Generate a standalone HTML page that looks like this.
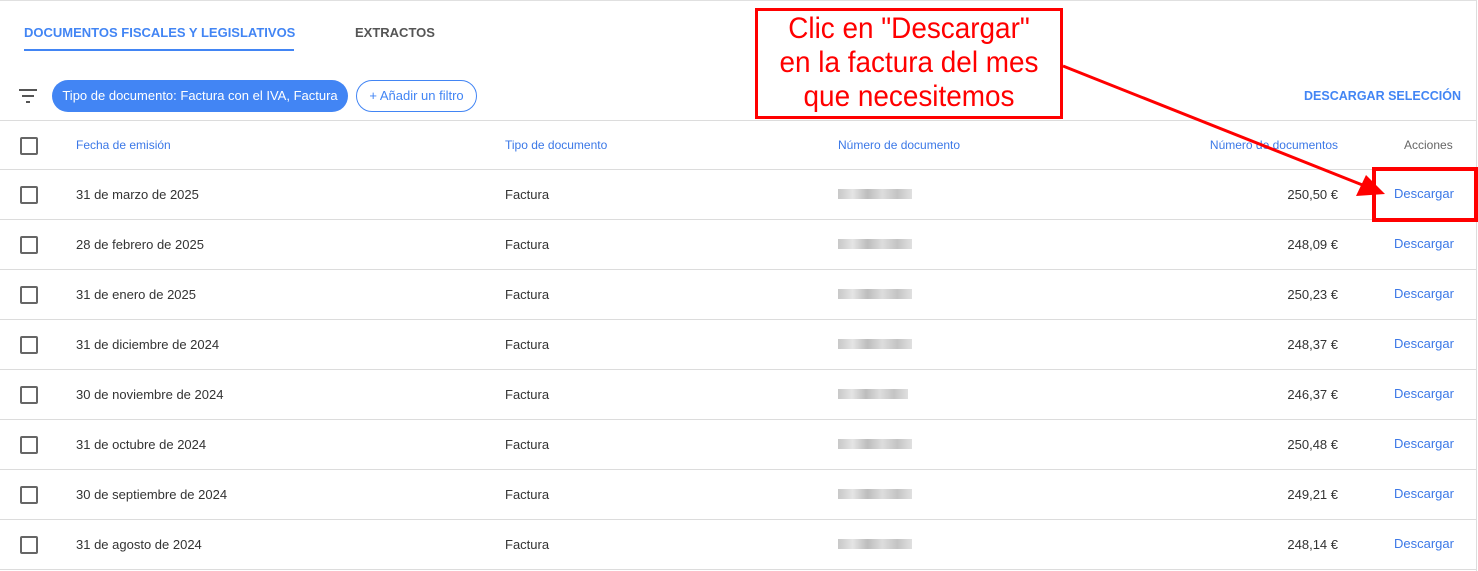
<!DOCTYPE html>
<html><head><meta charset="utf-8"><style>
body{margin:0;width:1478px;height:571px;background:#fff;font-family:"Liberation Sans",Arial,sans-serif;position:relative;overflow:hidden;color:#333}
.a{position:absolute;white-space:nowrap}
.hl{position:absolute;left:0;width:1476px;height:1px;background:#dcdcdc}
.cb{position:absolute;left:20px;width:14px;height:14px;border:2px solid #666;border-radius:2px}
.t{font-size:13px;color:#333}
.bl{color:#3b78e7}
.blur{position:absolute;left:838px;width:74px;height:10px;background:linear-gradient(90deg,#c8c8c8,#e4e4e4 20%,#bdbdbd 40%,#ddd 60%,#c4c4c4 80%,#e0e0e0)}
</style></head><body>
<div class="hl" style="top:0;background:#e0e0e0"></div>
<div style="position:absolute;left:1476px;top:0;width:1px;height:571px;background:#ddd"></div>
<div class="a bl" style="left:24px;top:25px;font-size:13px;font-weight:bold;color:#4285f4">DOCUMENTOS FISCALES Y LEGISLATIVOS</div>
<div style="position:absolute;left:24px;top:49px;width:270px;height:2px;background:#4285f4"></div>
<div class="a" style="left:355px;top:25px;font-size:13px;font-weight:bold;color:#555">EXTRACTOS</div>
<svg class="a" style="left:18px;top:88px" width="20" height="16"><path d="M1 2h18M4 8h12M8 14h4" stroke="#555" stroke-width="2"/></svg>
<div class="a" style="left:52px;top:80px;width:296px;height:32px;border-radius:16px;background:#4285f4;color:#fff;font-size:13px;line-height:32px;text-align:center">Tipo de documento: Factura con el IVA, Factura</div>
<div class="a" style="left:356px;top:80px;width:119px;height:30px;border-radius:16px;border:1px solid #4285f4;color:#4285f4;font-size:13px;line-height:30px;text-align:center">+ Añadir un filtro</div>
<div class="a" style="right:17px;top:89px;font-size:12.5px;font-weight:bold;color:#4285f4">DESCARGAR SELECCIÓN</div>
<div class="hl" style="top:120px"></div>
<div class="cb" style="top:137px"></div>
<div class="a t bl" style="left:76px;top:138px;font-size:12px">Fecha de emisión</div>
<div class="a t bl" style="left:505px;top:138px;font-size:12px">Tipo de documento</div>
<div class="a t bl" style="left:838px;top:138px;font-size:12px">Número de documento</div>
<div class="a t bl" style="right:140px;top:138px;font-size:12px">Número de documentos</div>
<div class="a t" style="left:1404px;top:138px;font-size:12px;color:#666">Acciones</div>
<div class="hl" style="top:169px"></div>
<div id="rows"></div>
<script>
var d=[["31 de marzo de 2025","250,50 €"],["28 de febrero de 2025","248,09 €"],["31 de enero de 2025","250,23 €"],["31 de diciembre de 2024","248,37 €"],["30 de noviembre de 2024","246,37 €"],["31 de octubre de 2024","250,48 €"],["30 de septiembre de 2024","249,21 €"],["31 de agosto de 2024","248,14 €"]];
var h="";d.forEach(function(r,i){var y=169+i*50;
h+='<div class="cb" style="top:'+(y+17)+'px"></div><div class="a t" style="left:76px;top:'+(y+18)+'px">'+r[0]+'</div><div class="a t" style="left:505px;top:'+(y+18)+'px">Factura</div><div class="blur" style="top:'+(y+20)+'px;width:'+(i==4?70:74)+'px"></div><div class="a t" style="right:140px;top:'+(y+18)+'px">'+r[1]+'</div><div class="a t bl" style="left:1394px;top:'+(y+17)+'px">Descargar</div><div class="hl" style="top:'+(y+50)+'px"></div>';});
document.getElementById("rows").innerHTML=h;
</script>
<div class="a" style="left:755px;top:8px;width:302px;height:104px;border:3px solid #f00;background:#fff;color:#f00;font-size:30px;line-height:34px;text-align:center;padding-top:1px"><div style="transform:scaleX(0.93)">Clic en "Descargar"<br>en la factura del mes<br>que necesitemos</div></div>
<div class="a" style="left:1372px;top:167px;width:98px;height:47px;border:4px solid #f00"></div>
<svg class="a" style="left:0;top:0" width="1478" height="571"><line x1="1063" y1="66" x2="1365" y2="186" stroke="#f00" stroke-width="3"/><polygon points="1385,194 1356,196 1366,175" fill="#f00"/></svg>
</body></html>
